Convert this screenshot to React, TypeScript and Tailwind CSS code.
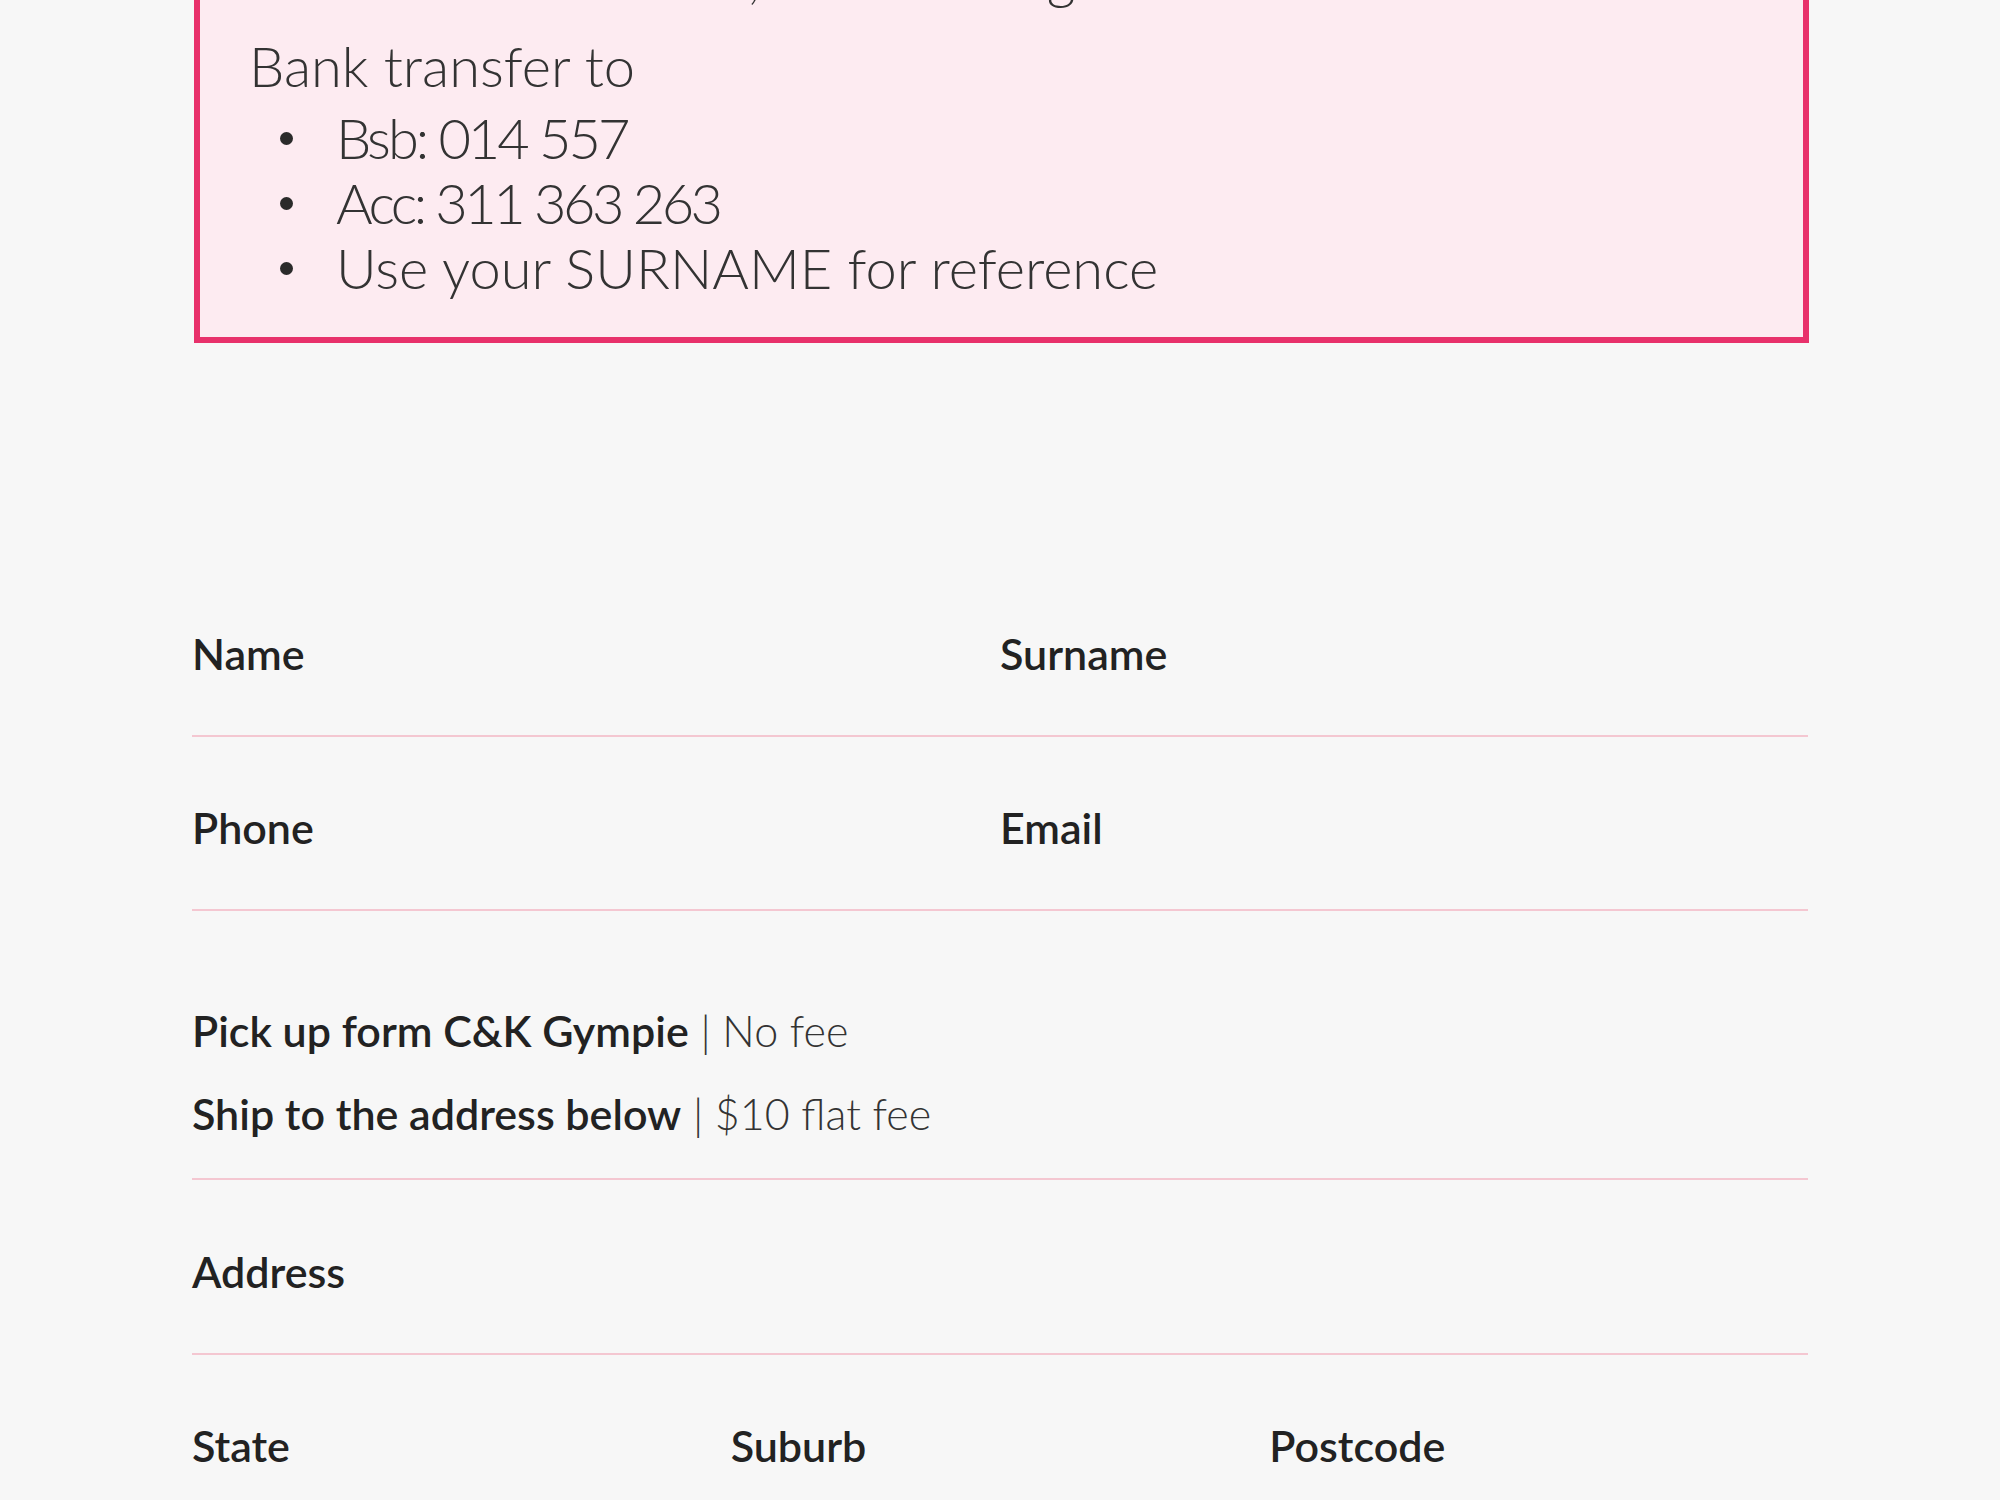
const labelText = "block text-[43px] leading-[52px] font-semibold text-[#222]";
const inputLine =
  "block w-full h-[57px] bg-transparent border-b-2 border-[#f4c7d1] outline-none text-[40px] text-[#333]";

function Field({ label, name }: { label: string; name: string }) {
  return (
    <div>
      <label htmlFor={name} className={labelText}>
        {label}
      </label>
      <input id={name} name={name} className={inputLine} />
    </div>
  );
}

function Bullet({ children, className = "" }: { children: React.ReactNode; className?: string }) {
  return (
    <li className="flex items-center">
      <span className="mt-[2px] ml-[31px] mr-[43px] h-[13px] w-[13px] shrink-0 rounded-full bg-[#2a2a2a]" />
      <span className={className}>{children}</span>
    </li>
  );
}

export default function App() {
  return (
    <div className="min-h-screen bg-[#f7f7f7] font-[Lato,sans-serif] pb-[120px]">
      <div className="mx-auto w-[1616px] -mt-[102px]">
        <section className="ml-[2px] -mr-[1px] border-[6px] border-[#e8316b] bg-[#fdebf1] pt-[40px] pb-[37px] px-[49px] text-[56px] leading-[65px] font-light text-[#333]">
          <p>Cash at the hall desk, or the listing below:</p>
          <p className="mt-[24px]">Bank transfer to</p>
          <ul className="mt-[7px]">
            <Bullet className="tracking-[-3px]">Bsb: 014 557</Bullet>
            <Bullet className="tracking-[-3.5px]">Acc: 311 363 263</Bullet>
            <Bullet>Use your SURNAME for reference</Bullet>
          </ul>
        </section>

        <form className="mt-[285px]">
          <div className="grid grid-cols-2 gap-y-[65px]">
            <Field label="Name" name="name" />
            <Field label="Surname" name="surname" />
            <Field label="Phone" name="phone" />
            <Field label="Email" name="email" />
          </div>

          <div className="flex flex-col gap-[31px] pt-[94px] pb-[38px] border-b-2 border-[#f4c7d1] text-[43px] leading-[52px] text-[#222]">
            <p>
              <span className="font-semibold">Pick up form C&amp;K Gympie</span>
              <span className="font-light text-[#333]"> | No fee</span>
            </p>
            <p>
              <span className="font-semibold">Ship to the address below</span>
              <span className="font-light text-[#333]"> | $10 flat fee</span>
            </p>
          </div>

          <div className="mt-[66px]">
            <Field label="Address" name="address" />
          </div>

          <div className="mt-[65px] grid grid-cols-3">
            <Field label="State" name="state" />
            <Field label="Suburb" name="suburb" />
            <Field label="Postcode" name="postcode" />
          </div>
        </form>
      </div>
    </div>
  );
}
